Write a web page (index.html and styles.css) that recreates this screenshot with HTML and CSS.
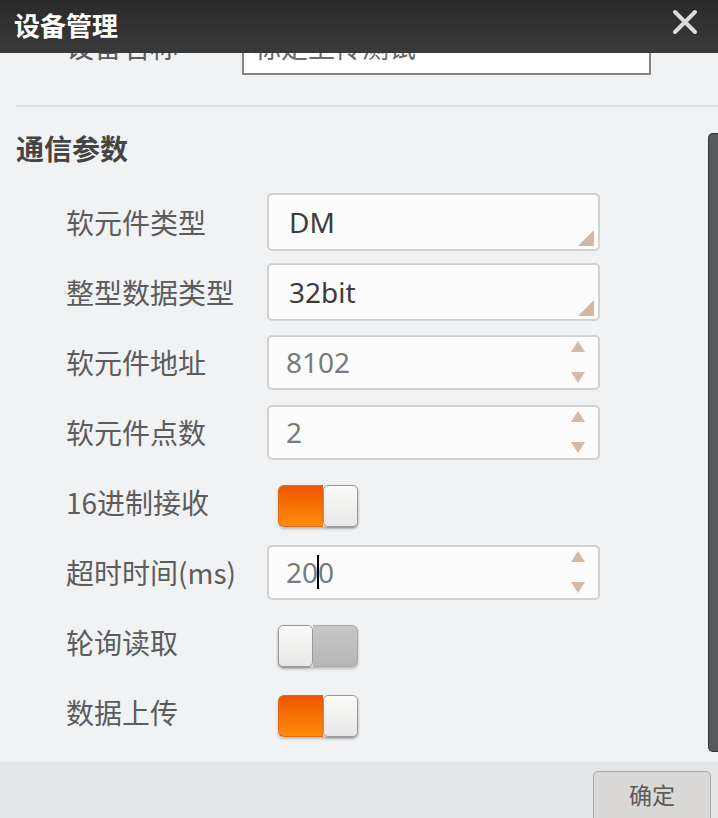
FILE: index.html
```html
<!DOCTYPE html>
<html lang="zh-CN">
<head>
<meta charset="utf-8">
<title>设备管理</title>
<link rel="stylesheet" href="styles.css">
</head>
<body>
<div class="dialog">
  <header class="titlebar">
    <h1 class="title">设备管理</h1>
    <svg class="close" width="26" height="26" viewBox="0 0 26 26" aria-label="关闭">
      <path d="M3 3 L23 23 M23 3 L3 23" stroke="#dcdcdc" stroke-width="4" stroke-linecap="round"/>
    </svg>
  </header>

  <div class="body">
    <div class="content">
      <div class="row row-name">
        <span class="label">设备名称</span>
        <div class="name-box">标定上传测试</div>
      </div>

      <div class="divider"></div>

      <h2 class="section">通信参数</h2>

      <div class="form">
        <div class="row">
          <span class="label">软元件类型</span>
          <div class="field select"><span class="value">DM</span><span class="corner"></span></div>
        </div>
        <div class="row">
          <span class="label">整型数据类型</span>
          <div class="field select"><span class="value">32bit</span><span class="corner"></span></div>
        </div>
        <div class="row">
          <span class="label">软元件地址</span>
          <div class="field number"><span class="value">8102</span>
            <span class="spin"><i class="up"></i><i class="down"></i></span></div>
        </div>
        <div class="row">
          <span class="label">软元件点数</span>
          <div class="field number"><span class="value">2</span>
            <span class="spin"><i class="up"></i><i class="down"></i></span></div>
        </div>
        <div class="row">
          <span class="label">16进制接收</span>
          <div class="toggle on"><span class="fill"></span><span class="knob"></span></div>
        </div>
        <div class="row">
          <span class="label">超时时间(ms)</span>
          <div class="field number"><span class="value">20<span class="caret"></span>0</span>
            <span class="spin"><i class="up"></i><i class="down"></i></span></div>
        </div>
        <div class="row">
          <span class="label">轮询读取</span>
          <div class="toggle off"><span class="knob"></span><span class="fill"></span></div>
        </div>
        <div class="row">
          <span class="label">数据上传</span>
          <div class="toggle on"><span class="fill"></span><span class="knob"></span></div>
        </div>
      </div>
    </div>
    <div class="thumb"></div>
  </div>

  <footer class="footer">
    <button class="ok" type="button">确定</button>
  </footer>
</div>
</body>
</html>
```

FILE: styles.css
```css
html, body {
  margin: 0;
  padding: 0;
}

body {
  font-family: "Noto Sans", "Noto Sans CJK SC", sans-serif;
  background: #f1f2f4;
}

.dialog {
  width: 718px;
  height: 818px;
  display: flex;
  flex-direction: column;
  overflow: hidden;
  background: #f1f2f4;
}

/* ---- title bar ---- */
.titlebar {
  height: 53px;
  flex: none;
  display: flex;
  align-items: center;
  justify-content: space-between;
  padding: 0 20px 0 14px;
  background: linear-gradient(#2a2a2a, #3a3a3a);
  position: relative;
  z-index: 2;
}

.title {
  margin: 0;
  font-family: "Noto Sans CJK SC", sans-serif;
  font-weight: 700;
  font-size: 26px;
  line-height: 1;
  color: #ffffff;
  margin-top: -4px;
}

.close {
  display: block;
  margin-top: -9px;
  filter: blur(0.4px);
}

/* ---- scrolling body ---- */
.body {
  flex: 1;
  position: relative;
  overflow: hidden;
}

.content {
  width: 708px;
}

.thumb {
  position: absolute;
  right: 0;
  top: 80px;
  width: 9px;
  height: 617px;
  background: #58595b;
  border: 1px solid #333;
  border-right: none;
  border-radius: 5px 0 0 5px;
}

.row {
  height: 70px;
  display: flex;
  align-items: center;
  padding-left: 66px;
}

.label {
  width: 201px;
  flex: none;
  font-family: "Noto Sans CJK SC", sans-serif;
  font-size: 28px;
  font-weight: 400;
  color: #5c5c5c;
  white-space: nowrap;
}

.row-name {
  margin-top: -42px;
}

.row-name .label {
  width: 176px;
}

.name-box {
  width: 395px;
  height: 54px;
  border: 2px solid #858585;
  background: #ffffff;
  box-sizing: content-box;
  display: flex;
  align-items: center;
  padding-left: 10px;
  font-family: "Noto Sans CJK SC", sans-serif;
  font-size: 27px;
  color: #6a6a6a;
  white-space: nowrap;
  overflow: hidden;
}

.divider {
  height: 2px;
  background: #dcdcdc;
  margin: 24px 0 0 16px;
  width: 702px;
}

.section {
  margin: 21px 0 0 16px;
  height: 40px;
  line-height: 40px;
  font-family: "Noto Sans CJK SC", sans-serif;
  font-weight: 700;
  font-size: 28px;
  color: #444;
}

.form {
  margin-top: 19px;
}

/* ---- inputs ---- */
.field {
  width: 333px;
  box-sizing: border-box;
  border: 2px solid #d2d2d2;
  border-radius: 5px;
  background: #fcfcfc;
  display: flex;
  align-items: center;
  position: relative;
}

.field.select {
  height: 58px;
  padding-left: 20px;
}

.field.number {
  height: 55px;
  padding-left: 17px;
}

.value {
  font-size: 28px;
  line-height: 1;
  white-space: nowrap;
}

.select .value {
  color: #3c3c3c;
}

.number .value {
  color: #7a7a7a;
}

.caret {
  display: inline-block;
  width: 2px;
  height: 34px;
  background: #000;
  vertical-align: -6px;
  margin: 0 -1px;
}

.corner {
  position: absolute;
  right: 4px;
  bottom: 3px;
  width: 0;
  height: 0;
  border-style: solid;
  border-width: 0 0 16px 16px;
  border-color: transparent transparent #d4b6a2 transparent;
}

.spin {
  margin-left: auto;
  margin-right: 13px;
  display: flex;
  flex-direction: column;
  justify-content: space-between;
  height: 42px;
}

.spin i {
  display: block;
  width: 0;
  height: 0;
  border-style: solid;
}

.spin .up {
  border-width: 0 7px 11px 7px;
  border-color: transparent transparent #d6b8a4 transparent;
}

.spin .down {
  border-width: 11px 7px 0 7px;
  border-color: #d6b8a4 transparent transparent transparent;
}

/* ---- switches ---- */
.toggle {
  width: 80px;
  height: 42px;
  margin: 7px 0 0 11px;
  display: flex;
  border-radius: 6px;
  box-shadow: 0 2px 3px rgba(0, 0, 0, 0.22);
}

.toggle .fill {
  flex: 1;
}

.toggle.on .fill {
  background: linear-gradient(#ef5600, #ff8c0a);
  border-radius: 6px 0 0 6px;
  border: 1px solid #e06a1a;
  border-right: none;
}

.toggle.off .fill {
  background: linear-gradient(#c6c6c6, #b7b7b7);
  border-radius: 0 6px 6px 0;
  border: 1px solid #a9a9a9;
  border-left: none;
}

.toggle .knob {
  width: 33px;
  flex: none;
  background: linear-gradient(#fbfaf8, #e7e7e7);
  border: 1.5px solid #9a9a9a;
  border-radius: 5px;
  box-shadow: 0 1px 2px rgba(0, 0, 0, 0.25);
}

/* ---- footer ---- */
.footer {
  height: 56px;
  flex: none;
  background: #e4e5e7;
  display: flex;
  justify-content: flex-end;
  align-items: flex-start;
  padding: 9px 7px 0 0;
  box-sizing: border-box;
  position: relative;
  z-index: 2;
}

.ok {
  width: 118px;
  height: 52px;
  margin: 0;
  padding: 0 0 6px;
  border: 1.5px solid #a9a9a9;
  border-radius: 5px;
  background: #d9d8d6;
  font-family: "Noto Sans CJK SC", sans-serif;
  font-size: 23px;
  color: #5a5a5a;
}
```
